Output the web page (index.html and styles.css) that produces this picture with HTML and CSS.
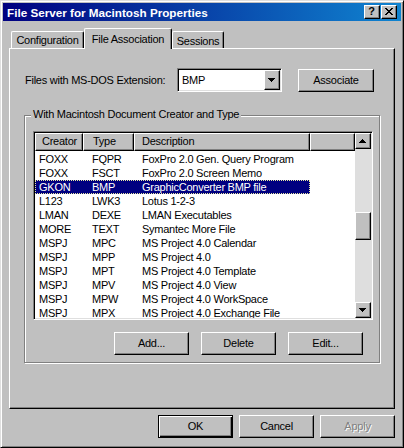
FILE: index.html
```html
<!DOCTYPE html>
<html>
<head>
<meta charset="utf-8">
<title>File Server for Macintosh Properties</title>
<link rel="stylesheet" href="styles.css">
</head>
<body>
<div class="window">
  <div class="titlebar">
    <span class="title">File Server for Macintosh Properties</span>
    <button class="cap cap-help">?</button>
    <button class="cap cap-close"><svg width="8" height="7" viewBox="0 0 8 7"><path fill="#000" d="M0 0h2v1H0zM6 0h2v1H6zM1 1h2v1H1zM5 1h2v1H5zM2 2h4v1H2zM3 3h2v1H3zM2 4h4v1H2zM1 5h2v1H1zM5 5h2v1H5zM0 6h2v1H0zM6 6h2v1H6z"/></svg></button>
  </div>
  <div class="body">
    <div class="tabs">
      <div class="tab tab-config">Configuration</div>
      <div class="tab tab-assoc active">File Association</div>
      <div class="tab tab-sessions">Sessions</div>
    </div>
    <div class="panel">
      <div class="ext-row">
        <span class="ext-label">Files with MS-DOS Extension:</span>
        <div class="combo">
          <span class="combo-value">BMP</span>
          <span class="combo-btn"><svg width="7" height="4" viewBox="0 0 7 4"><path fill="#000" d="M0 0h7v1H0zM1 1h5v1H1zM2 2h3v1H2zM3 3h1v1H3z"/></svg></span>
        </div>
        <button class="btn btn-assoc">Associate</button>
      </div>
      <div class="group">
        <span class="group-label">With Macintosh Document Creator and Type</span>
        <div class="listview">
          <div class="lv-main">
            <div class="lv-header">
              <div class="hcell h1">Creator</div>
              <div class="hcell h2">Type</div>
              <div class="hcell h3">Description</div>
              <div class="hcell h4"></div>
            </div>
            <div class="lv-rows">
              <div class="row"><span class="c1">FOXX</span><span class="c2">FQPR</span><span class="c3">FoxPro 2.0 Gen. Query Program</span></div>
              <div class="row"><span class="c1">FOXX</span><span class="c2">FSCT</span><span class="c3">FoxPro 2.0 Screen Memo</span></div>
              <div class="row sel"><span class="c1">GKON</span><span class="c2">BMP</span><span class="c3">GraphicConverter BMP file</span></div>
              <div class="row"><span class="c1">L123</span><span class="c2">LWK3</span><span class="c3">Lotus 1-2-3</span></div>
              <div class="row"><span class="c1">LMAN</span><span class="c2">DEXE</span><span class="c3">LMAN Executables</span></div>
              <div class="row"><span class="c1">MORE</span><span class="c2">TEXT</span><span class="c3">Symantec More File</span></div>
              <div class="row"><span class="c1">MSPJ</span><span class="c2">MPC</span><span class="c3">MS Project 4.0 Calendar</span></div>
              <div class="row"><span class="c1">MSPJ</span><span class="c2">MPP</span><span class="c3">MS Project 4.0</span></div>
              <div class="row"><span class="c1">MSPJ</span><span class="c2">MPT</span><span class="c3">MS Project 4.0 Template</span></div>
              <div class="row"><span class="c1">MSPJ</span><span class="c2">MPV</span><span class="c3">MS Project 4.0 View</span></div>
              <div class="row"><span class="c1">MSPJ</span><span class="c2">MPW</span><span class="c3">MS Project 4.0 WorkSpace</span></div>
              <div class="row"><span class="c1">MSPJ</span><span class="c2">MPX</span><span class="c3">MS Project 4.0 Exchange File</span></div>
            </div>
          </div>
          <div class="scrollbar">
            <div class="sb-btn"><svg width="7" height="4" viewBox="0 0 7 4"><path fill="#000" d="M3 0h1v1H3zM2 1h3v1H2zM1 2h5v1H1zM0 3h7v1H0z"/></svg></div>
            <div class="sb-thumb"></div>
            <div class="sb-btn sb-down"><svg width="7" height="4" viewBox="0 0 7 4"><path fill="#000" d="M0 0h7v1H0zM1 1h5v1H1zM2 2h3v1H2zM3 3h1v1H3z"/></svg></div>
          </div>
        </div>
        <div class="group-btns">
          <button class="btn">Add...</button>
          <button class="btn">Delete</button>
          <button class="btn">Edit...</button>
        </div>
      </div>
    </div>
    <div class="dialog-btns">
      <button class="btn btn-default">OK</button>
      <button class="btn">Cancel</button>
      <button class="btn btn-disabled">Apply</button>
    </div>
  </div>
</div>
</body>
</html>
```

FILE: styles.css
```css
* { box-sizing: border-box; }
html, body { margin: 0; padding: 0; }
body {
  width: 404px;
  height: 448px;
  overflow: hidden;
  background: #c0c0c0;
  font-family: "Liberation Sans", Arial, sans-serif;
  font-size: 11px;
  letter-spacing: -0.25px;
  color: #000;
}
button {
  appearance: none;
  margin: 0;
  padding: 0;
  font: inherit;
  letter-spacing: inherit;
  color: inherit;
  background: #c0c0c0;
}
.window {
  width: 404px;
  height: 448px;
  background: #c0c0c0;
  border: 1px solid;
  border-color: #dfdfdf #000 #000 #dfdfdf;
  box-shadow: inset 1px 1px #fff, inset -1px -1px #808080;
  padding: 2px;
  display: flex;
  flex-direction: column;
}
.titlebar {
  height: 18px;
  flex: none;
  background: linear-gradient(to right, #000080, #1084d0);
  display: flex;
  align-items: center;
  padding: 0 4px 0 4px;
}
.title {
  flex: 1;
  color: #fff;
  font-weight: bold;
  font-size: 11.7px;
  letter-spacing: 0;
  line-height: 17px;
  white-space: nowrap;
}
.cap {
  width: 16px;
  height: 14px;
  border: 1px solid;
  border-color: #fff #000 #000 #fff;
  box-shadow: inset -1px -1px #808080;
  display: flex;
  align-items: center;
  justify-content: center;
  font-weight: bold;
  font-size: 11px;
  line-height: 11px;
  letter-spacing: 0;
}
.cap-help { padding: 0 1px 1px 0; }
.cap-close { margin-left: 1px; padding: 0 1px 1px 0; }
.cap svg { display: block; }

.body {
  flex: 1;
  padding: 0 6px;
  display: flex;
  flex-direction: column;
}
.tabs {
  display: flex;
  align-items: flex-end;
  height: 21px;
  margin: 7px 0 -1px 2px;
  position: relative;
  z-index: 1;
}
.tab {
  height: 17px;
  margin-bottom: 1px;
  border-top: 1px solid #fff;
  border-left: 1px solid #fff;
  border-right: 1px solid #000;
  border-radius: 2px 2px 0 0;
  box-shadow: inset -1px 0 #808080;
  background: #c0c0c0;
  text-align: center;
  line-height: 13px;
  padding-top: 2px;
  white-space: nowrap;
}
.tab-config { width: 73px; }
.tab-assoc { width: 88px; }
.tab-sessions { width: 52px; padding-top: 3px; }
.tab.active {
  height: 21px;
  margin-bottom: 0;
  padding-top: 4px;
}
.panel {
  height: 361px;
  flex: none;
  border: 1px solid;
  border-color: #fff #000 #000 #fff;
  box-shadow: inset -1px -1px #808080;
  display: flex;
  flex-direction: column;
}
.ext-row {
  display: flex;
  align-items: center;
  height: 24px;
  margin: 19px 0 0 15px;
}
.ext-label { width: 152px; line-height: 13px; white-space: nowrap; }
.combo {
  width: 105px;
  height: 24px;
  border: 1px solid;
  border-color: #808080 #fff #fff #808080;
  box-shadow: inset 1px 1px #000, inset -1px -1px #dfdfdf;
  background: #fff;
  padding: 1px;
  display: flex;
  align-items: stretch;
}
.combo-value { flex: 1; padding-left: 3px; line-height: 20px; }
.combo-btn {
  width: 16px;
  border: 1px solid;
  border-color: #fff #000 #000 #fff;
  box-shadow: inset -1px -1px #808080;
  background: #c0c0c0;
  display: flex;
  align-items: center;
  justify-content: center;
  padding: 0 1px 0 0;
}
.combo-btn svg, .sb-btn svg { display: block; }
.btn {
  width: 75px;
  height: 23px;
  border: 1px solid;
  border-color: #fff #000 #000 #fff;
  box-shadow: inset -1px -1px #808080;
  display: flex;
  align-items: center;
  justify-content: center;
  line-height: 13px;
  padding: 0 0 1px 0;
}
.btn-assoc {
  width: 76px;
  margin-left: 16px;
  align-self: flex-start;
  margin-top: 1px;
}
.btn-default {
  border: 1px solid #000;
  box-shadow: inset 1px 1px #fff, inset -1px -1px #000, inset -2px -2px #808080;
}
.btn-disabled {
  color: #808080;
  text-shadow: 1px 1px #fff;
}

.group {
  width: 356px;
  height: 248px;
  margin: 23px 0 0 14px;
  border: 1px solid #808080;
  box-shadow: 1px 1px #fff, inset 1px 1px #fff;
  display: flex;
  flex-direction: column;
}
.group-label {
  align-self: flex-start;
  margin: -8px 0 0 6px;
  padding: 0 2px;
  background: #c0c0c0;
  line-height: 13px;
  white-space: nowrap;
}
.listview {
  width: 340px;
  height: 189px;
  margin: 10px 0 0 8px;
  border: 1px solid;
  border-color: #808080 #fff #fff #808080;
  box-shadow: inset 1px 1px #000, inset -1px -1px #dfdfdf;
  padding: 1px;
  display: flex;
}
.lv-main {
  flex: 1;
  background: #fff;
  overflow: hidden;
  display: flex;
  flex-direction: column;
}
.lv-header { display: flex; height: 18px; flex: none; }
.hcell {
  height: 18px;
  border: 1px solid;
  border-color: #fff #000 #000 #fff;
  box-shadow: inset -1px -1px #808080;
  background: #c0c0c0;
  line-height: 15px;
  white-space: nowrap;
}
.h1 { width: 48px; padding-left: 6px; }
.h2 { width: 51px; padding-left: 9px; }
.h3 { width: 176px; padding-left: 7px; }
.h4 { flex: 1; }
.lv-rows { padding-top: 1px; }
.row {
  display: flex;
  width: 275px;
  height: 14px;
  line-height: 14px;
  white-space: nowrap;
}
.row.sel {
  background: #000080;
  color: #fff;
  outline: 1px dotted #e8e8a0;
  outline-offset: -1px;
}
.c1 { width: 48px; padding-left: 4px; }
.c2 { width: 51px; padding-left: 9px; }
.c3 { width: 176px; padding-left: 8px; overflow: hidden; }
.scrollbar {
  width: 16px;
  background: #dedede;
  display: flex;
  flex-direction: column;
}
.sb-btn {
  height: 16px;
  flex: none;
  border: 1px solid;
  border-color: #fff #000 #000 #fff;
  box-shadow: inset -1px -1px #808080;
  background: #c0c0c0;
  display: flex;
  align-items: center;
  justify-content: center;
  padding: 0 1px 1px 0;
}
.sb-thumb {
  height: 28px;
  flex: none;
  margin-top: 63px;
  border: 1px solid;
  border-color: #fff #000 #000 #fff;
  box-shadow: inset -1px -1px #808080;
  background: #c0c0c0;
}
.sb-down { margin-top: auto; }
.group-btns {
  display: flex;
  justify-content: flex-end;
  gap: 12px;
  padding-right: 16px;
  margin-top: 12px;
}
.dialog-btns {
  display: flex;
  justify-content: flex-end;
  gap: 6px;
  margin-top: 6px;
}
```
